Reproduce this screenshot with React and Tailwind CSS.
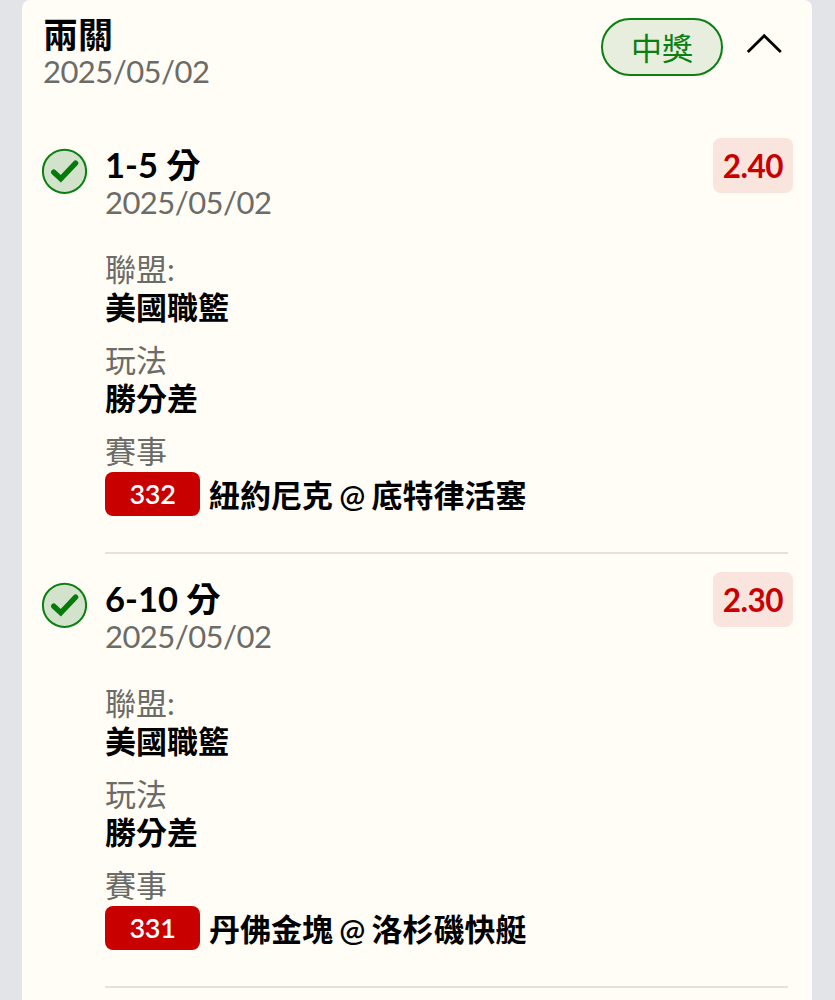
import React from "react";

const legs = [
  { title: "1-5 分", date: "2025/05/02", odds: "2.40", code: "332", away: "紐約尼克", home: "底特律活塞" },
  { title: "6-10 分", date: "2025/05/02", odds: "2.30", code: "331", away: "丹佛金塊", home: "洛杉磯快艇" },
];

function CheckBadge() {
  return (
    <svg className="mt-[10px] h-[46px] w-[46px] shrink-0" viewBox="0 0 46 46" fill="none">
      <circle cx="23.5" cy="23.3" r="21.6" fill="#d3e2ca" stroke="#0b7f12" strokeWidth="2" />
      <path d="M12.8 24.2 19.8 30.8 34.6 15.2" stroke="#047a08" strokeWidth="5.4" strokeLinecap="round" />
    </svg>
  );
}

function Field({ label, value }) {
  return (
    <div className="mb-[15px]">
      <div className="h-[38px] text-[31px] leading-[38px] text-[#6b6b68]">{label}</div>
      <div className="h-[38px] text-[31px] leading-[38px] font-bold">{value}</div>
    </div>
  );
}

function Leg({ leg }) {
  return (
    <section className="flex h-[434px] pl-[19px]">
      <CheckBadge />
      <div className="ml-[18px] flex h-[416px] w-[683px] flex-col border-b-2 border-[#e5e1dc]">
        <div className="flex justify-between">
          <div className="pt-[8px]">
            <h2 className="h-[38px] text-[34.5px] leading-[38px] font-bold">{leg.title}</h2>
            <div className="h-[37px] text-[31px] leading-[37px] tracking-[-0.55px] text-[#6b6b68]">{leg.date}</div>
          </div>
          <div className="-mr-[5px] flex h-[55px] w-[80px] items-center justify-center rounded-lg bg-[#f9e5de] pt-[2px] text-[31.5px] font-bold tracking-[-0.5px] text-[#c80000]">
            {leg.odds}
          </div>
        </div>
        <div className="mt-[29px]">
          <Field label="聯盟:" value="美國職籃" />
          <Field label="玩法" value="勝分差" />
          <div className="h-[38px] text-[31px] leading-[38px] text-[#6b6b68]">賽事</div>
          <div className="mt-[2px] flex h-[44px] whitespace-nowrap">
            <span className="flex h-[44px] w-[95px] items-center justify-center rounded-lg bg-[#c80000] pt-px text-[27px] font-semibold tracking-[-0.4px] text-white">
              {leg.code}
            </span>
            <span className="ml-[9px] pt-px text-[31px] leading-[45px] font-semibold [word-spacing:-1.5px]">
              {leg.away} @ {leg.home}
            </span>
          </div>
        </div>
      </div>
    </section>
  );
}

export default function App() {
  return (
    <main className="h-[1000px] w-full overflow-hidden bg-[#e3e4e8] pr-[23px] pl-[22px] font-['Lato','Noto_Sans_CJK_TC',sans-serif] text-black">
      <div className="h-full rounded-t-lg bg-[#fffdf5]">
        <header className="flex h-[138px] justify-between pl-[21px]">
          <div className="pt-[16px]">
            <h1 className="h-[37px] text-[35px] leading-[36px] font-bold">兩關</h1>
            <div className="h-[37px] text-[31px] leading-[37px] tracking-[-0.55px] text-[#6b6b68]">2025/05/02</div>
          </div>
          <div className="flex pt-[18px] pr-[29px]">
            <div className="flex h-[58px] w-[122px] items-center justify-center rounded-full border-2 border-[#0b7f12] bg-[#e7eedd] pt-[2px] text-[31px] text-[#0b7f12]">
              中獎
            </div>
            <svg className="mt-[14px] ml-[22px] h-[24px] w-[38px]" viewBox="0 0 38 24" fill="none">
              <path d="M2.8 20 19.2 3.8 35.8 20" stroke="#000" strokeWidth="2.8" />
            </svg>
          </div>
        </header>
        {legs.map((leg) => (
          <Leg key={leg.code} leg={leg} />
        ))}
      </div>
    </main>
  );
}
